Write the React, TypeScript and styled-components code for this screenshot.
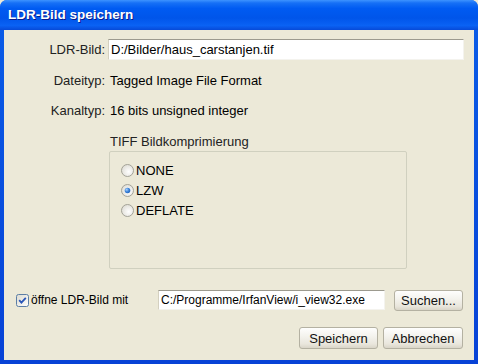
import { FC } from "react";
import styled, { createGlobalStyle } from "styled-components";

// ----------------------------------------------------------------------------

const GlobalStyle = createGlobalStyle`
  html, body {
    margin: 0;
    padding: 0;
    background: #ece9d8;
  }
  * {
    box-sizing: border-box;
  }
`;

const FONT = `"Liberation Sans", Arial, sans-serif`;

// ----------------------------------------------------------------------------

const Window = styled.div`
  width: 478px;
  height: 364px;
  display: flex;
  flex-direction: column;
  background: linear-gradient(180deg, #0a5de8 0%, #0742d6 100%);
  border-radius: 7px 7px 0 0;
  overflow: hidden;
  font-family: ${FONT};
  font-size: 13px;
  color: #000;
`;

const TitleBar = styled.div`
  height: 30px;
  flex: none;
  display: flex;
  align-items: center;
  padding: 0 0 1px 8px;
  background: linear-gradient(
    180deg,
    #3d93ff 0%,
    #1670f6 10%,
    #005bf2 28%,
    #0055ea 60%,
    #0a62f4 85%,
    #074ad8 100%
  );
  color: #fff;
  font-family: ${FONT};
  font-weight: bold;
  font-size: 13.5px;
  text-shadow: 1px 1px 0 #0a1a8a;
`;

const Body = styled.div`
  flex: 1;
  margin: 0 4px 4px 4px;
  background: #ece9d8;
  display: flex;
  flex-direction: column;
  padding: 9px 0 0 0;
`;

const FormGrid = styled.div`
  display: grid;
  grid-template-columns: 101px 1fr;
  column-gap: 3px;
  row-gap: 10px;
  padding-right: 10px;
`;

const Label = styled.div`
  height: 20px;
  display: flex;
  align-items: center;
  justify-content: flex-end;
  font-size: 13px;
  color: #222;
`;

const Value = styled.div`
  height: 20px;
  display: flex;
  align-items: center;
  padding-left: 2px;
  font-size: 13px;
`;

const TextField = styled.div<{ $width?: number; $small?: boolean }>`
  height: ${({ $width }) => ($width ? 20 : 21)}px;
  ${({ $width }) => ($width ? `width: ${$width}px;` : "")}
  display: flex;
  align-items: center;
  padding: 0 2px;
  background: #fff;
  border-top: 1px solid #9c9a8f;
  border-left: 1px solid #d4d0c0;
  border-right: 1px solid #f4f3ee;
  border-bottom: 1px solid #f4f3ee;
  font-size: ${({ $small }) => ($small ? 12 : 13)}px;
  white-space: nowrap;
  overflow: hidden;
`;

const Group = styled.div`
  margin: 15px 0 0 105px;
  width: 298px;
  display: flex;
  flex-direction: column;
`;

const GroupTitle = styled.div`
  height: 16px;
  font-size: 13px;
  padding-left: 1px;
  line-height: 14px;
  color: #222;
`;

const GroupBox = styled.div`
  height: 118px;
  border: 1px solid #d0d0bf;
  border-radius: 2px;
  padding: 8px 0 0 11px;
  display: flex;
  flex-direction: column;
`;

const RadioRow = styled.label`
  height: 20px;
  display: flex;
  align-items: center;
  gap: 2px;
  font-size: 13px;
`;

const CheckRow = styled.div`
  margin-top: 21px;
  height: 20px;
  display: flex;
  align-items: center;
  padding: 0 11px 0 12px;
`;

const CheckLabel = styled.label`
  display: flex;
  align-items: center;
  gap: 2px;
  width: 142px;
  font-size: 12px;
`;

const Button = styled.div<{ $width: number; $height?: number }>`
  width: ${({ $width }) => $width}px;
  height: ${({ $height }) => $height ?? 22}px;
  display: flex;
  align-items: center;
  justify-content: center;
  border: 1px solid #b4b1a2;
  border-radius: 3px;
  background: linear-gradient(180deg, #fefefd 0%, #f4f3ee 40%, #e9e6dc 80%, #d9d5c8 100%);
  font-size: 13px;
  color: #111;
`;

const ButtonRow = styled.div`
  margin-top: 17px;
  display: flex;
  justify-content: flex-end;
  gap: 5px;
  padding-right: 11px;
`;

const Spacer = styled.div`
  flex: 1;
`;

// ----------------------------------------------------------------------------

const Radio: FC<{ checked?: boolean }> = ({ checked }) => (
  <svg width="13" height="13" viewBox="0 0 13 13">
    <defs>
      <radialGradient id={checked ? "rg1" : "rg0"} cx="0.6" cy="0.6" r="0.7">
        <stop offset="0" stopColor="#ffffff" />
        <stop offset="1" stopColor="#dcdad2" />
      </radialGradient>
      <radialGradient id="dot" cx="0.35" cy="0.35" r="0.8">
        <stop offset="0" stopColor="#a8d3ff" />
        <stop offset="0.5" stopColor="#3c82d8" />
        <stop offset="1" stopColor="#1c5eb4" />
      </radialGradient>
    </defs>
    <circle
      cx="6.5"
      cy="6.5"
      r="6"
      fill={`url(#${checked ? "rg1" : "rg0"})`}
      stroke="#a3a297"
      strokeWidth="1"
    />
    {checked && <circle cx="6.5" cy="6.5" r="2.8" fill="url(#dot)" />}
  </svg>
);

const CheckBox: FC = () => (
  <svg width="13" height="13" viewBox="0 0 13 13">
    <defs>
      <linearGradient id="cb" x1="0" y1="0" x2="1" y2="1">
        <stop offset="0" stopColor="#dcdad0" />
        <stop offset="1" stopColor="#ffffff" />
      </linearGradient>
    </defs>
    <rect x="0.5" y="0.5" width="12" height="12" rx="2" fill="url(#cb)" stroke="#5c7ea5" />
    <path d="M3.2 6.2 L5.4 8.6 L9.8 3.8" fill="none" stroke="#2a56b8" strokeWidth="1.8" />
  </svg>
);

// ----------------------------------------------------------------------------

const App: FC = () => {
  return (
    <>
      <GlobalStyle />
      <Window>
        <TitleBar>LDR-Bild speichern</TitleBar>
        <Body>
          <FormGrid>
            <Label>LDR-Bild:</Label>
            <TextField>D:/Bilder/haus_carstanjen.tif</TextField>
            <Label>Dateityp:</Label>
            <Value>Tagged Image File Format</Value>
            <Label>Kanaltyp:</Label>
            <Value>16 bits unsigned integer</Value>
          </FormGrid>

          <Group>
            <GroupTitle>TIFF Bildkomprimierung</GroupTitle>
            <GroupBox>
              <RadioRow>
                <Radio />
                NONE
              </RadioRow>
              <RadioRow>
                <Radio checked />
                LZW
              </RadioRow>
              <RadioRow>
                <Radio />
                DEFLATE
              </RadioRow>
            </GroupBox>
          </Group>

          <CheckRow>
            <CheckLabel>
              <CheckBox />
              öffne LDR-Bild mit
            </CheckLabel>
            <TextField $width={227} $small>
              C:/Programme/IrfanView/i_view32.exe
            </TextField>
            <Spacer />
            <Button $width={69} $height={21}>
              Suchen...
            </Button>
          </CheckRow>

          <ButtonRow>
            <Button $width={79}>Speichern</Button>
            <Button $width={80}>Abbrechen</Button>
          </ButtonRow>
        </Body>
      </Window>
    </>
  );
};

export default App;
